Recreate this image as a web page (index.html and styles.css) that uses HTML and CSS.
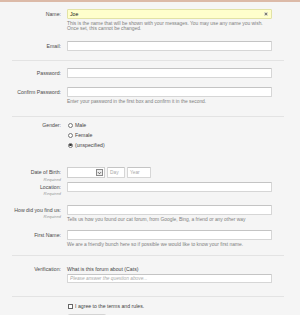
FILE: index.html
```html
<!DOCTYPE html>
<html lang="en">
  <head>
    <meta charset="UTF-8" />
    <meta name="viewport" content="width=device-width, initial-scale=1.0" />
    <title>Sign Up</title>
    <link rel="stylesheet" href="styles.css">
  </head>

  <body>
    <form class="signup">
      <div class="row">
        <div class="label-cell"><span class="label">Name:</span></div>
        <div class="field-cell">
          <div class="text-box name-box">
            <span class="value">Joe</span>
            <svg class="clear-icon" viewBox="0 0 5 5" width="4" height="4">
              <rect x="0.25" y="0.25" width="4.5" height="4.5" fill="#f4f4e0" stroke="#c8c8b0" stroke-width="0.5" />
              <path d="M1.3 1.3 L3.7 3.7 M3.7 1.3 L1.3 3.7" stroke="#333" stroke-width="0.8" />
            </svg>
          </div>
          <p class="hint">This is the name that will be shown with your messages. You may use any name you wish.<br>Once set, this cannot be changed.</p>
        </div>
      </div>

      <div class="row gap-10">
        <div class="label-cell"><span class="label">Email:</span></div>
        <div class="field-cell"><div class="text-box"></div></div>
      </div>

      <hr class="divider d-email" />

      <div class="row">
        <div class="label-cell"><span class="label">Password:</span></div>
        <div class="field-cell"><div class="text-box"></div></div>
      </div>

      <div class="row gap-9">
        <div class="label-cell"><span class="label">Confirm Password:</span></div>
        <div class="field-cell">
          <div class="text-box"></div>
          <p class="hint">Enter your password in the first box and confirm it in the second.</p>
        </div>
      </div>

      <hr class="divider d-pass" />

      <div class="row gender-row">
        <div class="label-cell"><span class="label">Gender:</span></div>
        <div class="field-cell">
          <div class="choice"><span class="radio"></span>Male</div>
          <div class="choice"><span class="radio"></span>Female</div>
          <div class="choice"><span class="radio checked"></span>(unspecified)</div>
        </div>
      </div>

      <div class="row dob-row">
        <div class="label-cell">
          <span class="label">Date of Birth:</span>
          <span class="required">Required</span>
        </div>
        <div class="field-cell date-fields">
          <div class="select-box">
            <span class="arrow">
              <svg viewBox="0 0 6 6" width="6" height="6">
                <path d="M1.2 2 L3 3.9 L4.8 2" fill="none" stroke="#333" stroke-width="0.9" />
              </svg>
            </span>
          </div>
          <div class="text-box small day"><span class="placeholder">Day</span></div>
          <div class="text-box small year"><span class="placeholder">Year</span></div>
        </div>
      </div>

      <div class="row">
        <div class="label-cell">
          <span class="label">Location:</span>
          <span class="required">Required</span>
        </div>
        <div class="field-cell"><div class="text-box"></div></div>
      </div>

      <div class="row gap-9">
        <div class="label-cell">
          <span class="label">How did you find us:</span>
          <span class="required">Required</span>
        </div>
        <div class="field-cell">
          <div class="text-box"></div>
          <p class="hint">Tells us how you found our cat forum, from Google, Bing, a friend or any other way</p>
        </div>
      </div>

      <div class="row gap-8">
        <div class="label-cell"><span class="label">First Name:</span></div>
        <div class="field-cell">
          <div class="text-box"></div>
          <p class="hint">We are a friendly bunch here so if possible we would like to know your first name.</p>
        </div>
      </div>

      <hr class="divider d-first" />

      <div class="row verify-row">
        <div class="label-cell"><span class="label">Verification:</span></div>
        <div class="field-cell">
          <p class="question">What is this forum about (Cats)</p>
          <div class="text-box verify-box"><span class="placeholder italic">Please answer the question above...</span></div>
        </div>
      </div>

      <hr class="divider d-verify" />

      <div class="row agree-row">
        <div class="label-cell"></div>
        <div class="field-cell">
          <div class="choice"><span class="checkbox"></span>I agree to the terms and rules.</div>
          <div class="button"></div>
        </div>
      </div>
    </form>
  </body>
</html>
```

FILE: styles.css
```css
/* Reset */
* {
  margin: 0;
  padding: 0;
  box-sizing: border-box;
}

body {
  background: #f5f5f5;
  border-top: 2px solid #dcbaa8;
  font-family: "Liberation Sans", Arial, sans-serif;
  color: #444444;
  overflow: hidden;
}

.signup {
  padding-top: 7px;
}

/* Rows */
.row {
  display: grid;
  grid-template-columns: 61px 205px;
  column-gap: 6px;
}

.gap-8 {
  margin-top: 8px;
}

.gap-9 {
  margin-top: 9px;
}

.gap-10 {
  margin-top: 10px;
}

.label-cell {
  display: flex;
  flex-direction: column;
  align-items: flex-end;
  text-align: right;
}

.label {
  font-size: 5.2px;
  line-height: 10px;
  color: #4a4a4a;
  white-space: nowrap;
}

.required {
  font-size: 4.3px;
  line-height: 5px;
  margin-top: -1px;
  font-style: italic;
  color: #9a9a9a;
}

.field-cell {
  display: flex;
  flex-direction: column;
}

/* Inputs */
.text-box {
  height: 10px;
  background: #ffffff;
  border: 1px solid #d6d6d6;
  border-top-color: #c4c4c4;
  border-radius: 1px;
  display: flex;
  align-items: center;
  padding: 0 2px;
}

.name-box {
  background: #ffffcc;
  border-color: #e2e2a6;
  justify-content: space-between;
  padding-right: 3px;
}

.value {
  font-size: 5.2px;
  color: #222222;
}

.clear-icon {
  display: block;
}

.placeholder {
  font-size: 4.8px;
  color: #aaaaaa;
}

.italic {
  font-style: italic;
}

.hint {
  margin-top: 2px;
  font-size: 4.9px;
  line-height: 5px;
  color: #808080;
  white-space: nowrap;
}

/* Dividers */
.divider {
  border: none;
  border-top: 1px solid #e3e3e3;
  margin-left: 12px;
  width: 272px;
}

.d-email {
  margin-top: 9px;
  margin-bottom: 7px;
}

.d-pass {
  margin-top: 12px;
  margin-bottom: 3px;
}

.d-first {
  margin-top: 8px;
  margin-bottom: 10px;
}

.d-verify {
  margin-top: 13px;
  margin-bottom: 4px;
}

/* Radios and checkbox */
.choice {
  display: flex;
  align-items: center;
  gap: 2px;
  font-size: 5.2px;
  line-height: 10px;
  color: #444444;
  padding-left: 1px;
}

.radio {
  width: 5px;
  height: 5px;
  border: 0.6px solid #777777;
  border-radius: 50%;
  background: #ffffff;
  display: flex;
  align-items: center;
  justify-content: center;
}

.radio.checked::after {
  content: "";
  width: 2.4px;
  height: 2.4px;
  border-radius: 50%;
  background: #333333;
}

.checkbox {
  width: 5px;
  height: 5px;
  border: 0.6px solid #666666;
  background: #ffffff;
}

/* Date of birth */
.dob-row {
  margin-top: 17px;
}

.dob-row .label {
  line-height: 11px;
}

.date-fields {
  flex-direction: row;
  gap: 2px;
  align-items: flex-start;
}

.select-box {
  width: 38px;
  height: 11px;
  background: #ffffff;
  border: 1px solid #cfcfcf;
  display: flex;
  justify-content: flex-end;
  align-items: center;
  padding-right: 1px;
}

.arrow {
  width: 7px;
  height: 7px;
  border: 0.6px solid #8a8a8a;
  background: #ececec;
  display: flex;
  align-items: center;
  justify-content: center;
}

.arrow svg {
  display: block;
}

.text-box.small {
  height: 11px;
}

.day {
  width: 18px;
}

.year {
  width: 24px;
}

/* Verification */
.question {
  font-size: 5.2px;
  line-height: 6px;
  color: #444444;
  white-space: nowrap;
}

.verify-box {
  margin-top: 2px;
  height: 9px;
}

.verify-row .label {
  line-height: 6px;
}

/* Button */
.button {
  margin-top: 3px;
  width: 40px;
  height: 12px;
  border: 1px solid #d4d4d4;
  border-radius: 3px;
  background: #eeeeee;
}
```
